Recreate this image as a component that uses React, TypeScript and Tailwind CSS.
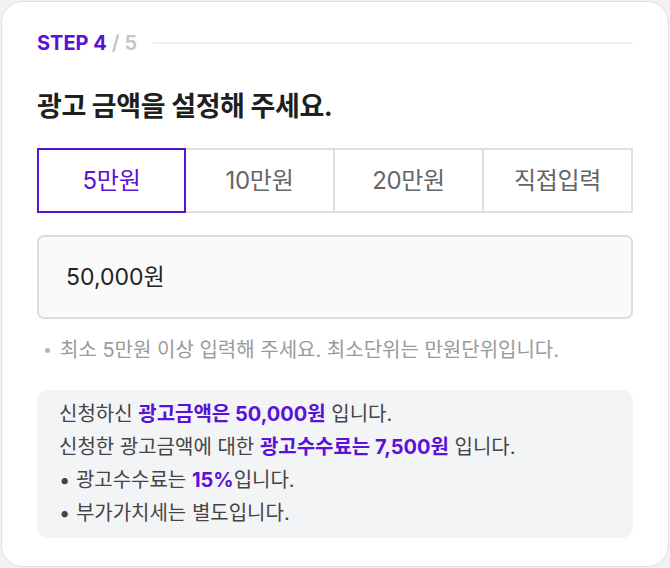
import React, { useState } from 'react';

const options = ['5만원', '10만원', '20만원', '직접입력'];

const App: React.FC = () => {
  const [selected, setSelected] = useState(0);

  return (
    <div
      className="w-[670px] h-[568px] bg-[#f1f1f1] p-[1px]"
      style={{ fontFamily: 'Inter, "Noto Sans CJK KR", sans-serif' }}
    >
      <div className="h-full bg-white border border-[#e2e2e2] rounded-[22px] px-[35px] pt-[29px]">
        {/* Step indicator */}
        <div className="flex items-center gap-[16px] h-[24px]">
          <span className="text-[20px] font-bold">
            <span className="text-[#5a12d6]">STEP 4</span>
            <span className="text-[#c4c4c4] font-semibold"> / 5</span>
          </span>
          <div className="flex-1 h-[2px] bg-[#f0f0f0]" />
        </div>

        <h2 className="mt-[35px] text-[27px] font-bold text-[#1f1f1f] leading-[34px] tracking-[-0.4px]">
          광고 금액을 설정해 주세요.
        </h2>

        {/* Amount options */}
        <div className="mt-[24px] grid grid-cols-4">
          {options.map((label, i) => (
            <button
              key={label}
              onClick={() => setSelected(i)}
              className={`h-[65px] text-[24px] flex items-center justify-center tracking-[-0.3px] ${
                i === selected
                  ? 'border-2 border-[#5a12d6] text-[#5a12d6]'
                  : 'border-2 border-l-0 border-[#e0e0e0] text-[#666666]'
              }`}
            >
              {label}
            </button>
          ))}
        </div>

        {/* Input */}
        <div className="mt-[22px] h-[84px] rounded-[7px] border-2 border-[#dcdcdc] bg-[#fafafa] flex items-center px-[27px]">
          <span className="text-[23px] text-[#222222]">50,000원</span>
        </div>

        <div className="mt-[17px] h-[28px] flex items-center gap-[10px] text-[20px] text-[#9a9a9a]">
          <span className="w-[5px] h-[5px] rounded-full bg-[#b5b5b5] ml-[8px]" />
          <span>최소 5만원 이상 입력해 주세요. 최소단위는 만원단위입니다.</span>
        </div>

        {/* Summary */}
        <div className="mt-[26px] rounded-[10px] bg-[#f3f4f6] pl-[22px] py-[8px] text-[20px] leading-[33px] text-[#444444]">
          <p>
            신청하신 <b className="font-bold text-[#5a12d6]">광고금액은 50,000원</b> 입니다.
          </p>
          <p>
            신청한 광고금액에 대한 <b className="font-bold text-[#5a12d6]">광고수수료는 7,500원</b> 입니다.
          </p>
          <p>
            • 광고수수료는 <b className="font-bold text-[#5a12d6]">15%</b>입니다.
          </p>
          <p>• 부가가치세는 별도입니다.</p>
        </div>
      </div>
    </div>
  );
};

export default App;
